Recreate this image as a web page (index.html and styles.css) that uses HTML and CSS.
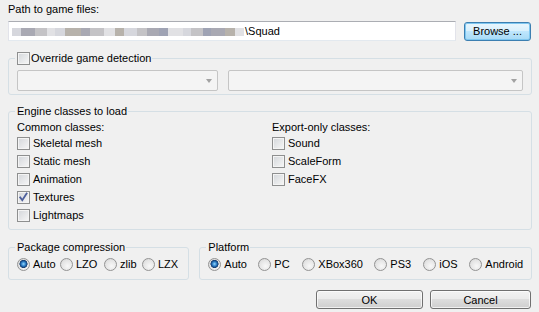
FILE: index.html
```html
<!DOCTYPE html>
<html>

<head>
  <meta charset="UTF-8">
  <title>Options</title>
  <link rel="stylesheet" href="styles.css">
</head>

<body>
  <div class="dialog">
    <div class="path-label">Path to game files:</div>
    <div class="path-row">
      <div class="textbox">
        <span class="mosaic"
        ><i class="m1" style="width:9px"></i><i class="m2" style="width:14px"></i><i class="m3" style="width:12px"></i><i class="m4" style="width:8px"></i><i class="m1" style="width:10px"></i><i class="m5" style="width:16px"></i><i class="m2" style="width:9px"></i><i class="m3" style="width:14px"></i><i class="m4" style="width:11px"></i><i class="m5" style="width:9px"></i><i class="m1" style="width:13px"></i><i class="m3" style="width:10px"></i><i class="m2" style="width:12px"></i><i class="m6" style="width:9px"></i><i class="m4" style="width:15px"></i><i class="m1" style="width:8px"></i><i class="m3" style="width:12px"></i><i class="m6" style="width:8px"></i><i class="m2" style="width:14px"></i><i class="m5" style="width:10px"></i><i class="m4" style="width:9px"></i></span
        ><span class="path-end">\Squad</span>
      </div>
      <button class="btn btn-default btn-browse" type="button">Browse ...</button>
    </div>

    <fieldset class="group group-override">
      <legend class="legend-check"><label class="check"><span class="box"></span>Override game detection</label></legend>
      <div class="combo-row">
        <div class="combo combo-left"><span class="arrow"></span></div>
        <div class="combo combo-right"><span class="arrow"></span></div>
      </div>
    </fieldset>

    <fieldset class="group group-engine">
      <legend>Engine classes to load</legend>
      <div class="class-cols">
        <div class="class-col class-col-left">
          <div class="col-title">Common classes:</div>
          <label class="check row"><span class="box"></span>Skeletal mesh</label>
          <label class="check row"><span class="box"></span>Static mesh</label>
          <label class="check row"><span class="box"></span>Animation</label>
          <label class="check row"><span class="box box-checked"><svg width="13" height="13" viewBox="0 0 13 13"><path d="M3.2 6.4 L5.3 9.2 L9.6 2.6" fill="none" stroke="#4d5f9c" stroke-width="1.8" stroke-linecap="square"/></svg></span>Textures</label>
          <label class="check row"><span class="box"></span>Lightmaps</label>
        </div>
        <div class="class-col">
          <div class="col-title">Export-only classes:</div>
          <label class="check row"><span class="box"></span>Sound</label>
          <label class="check row"><span class="box"></span>ScaleForm</label>
          <label class="check row"><span class="box"></span>FaceFX</label>
        </div>
      </div>
    </fieldset>

    <div class="bottom-groups">
      <fieldset class="group group-compression">
        <legend>Package compression</legend>
        <div class="radio-row">
          <label class="radio w43"><span class="dot dot-on"></span>Auto</label>
          <label class="radio w44"><span class="dot"></span>LZO</label>
          <label class="radio w38"><span class="dot"></span>zlib</label>
          <label class="radio"><span class="dot"></span>LZX</label>
        </div>
      </fieldset>
      <fieldset class="group group-platform">
        <legend>Platform</legend>
        <div class="radio-row">
          <label class="radio w50"><span class="dot dot-on"></span>Auto</label>
          <label class="radio w44"><span class="dot"></span>PC</label>
          <label class="radio w72"><span class="dot"></span>XBox360</label>
          <label class="radio w49"><span class="dot"></span>PS3</label>
          <label class="radio w46"><span class="dot"></span>iOS</label>
          <label class="radio"><span class="dot"></span>Android</label>
        </div>
      </fieldset>
    </div>

    <div class="button-row">
      <button class="btn btn-ok" type="button">OK</button>
      <button class="btn btn-cancel" type="button">Cancel</button>
    </div>
  </div>
</body>

</html>
```

FILE: styles.css
```css
html,
body {
  margin: 0;
  background: #f0f0f0;
}

.dialog {
  box-sizing: border-box;
  width: 539px;
  height: 312px;
  padding: 3px 7px 0 8px;
  font-family: "Liberation Sans", Arial, sans-serif;
  font-size: 11px;
  line-height: 13px;
  color: #000;
}

.path-label {
  height: 13px;
}

.path-row {
  display: flex;
  align-items: center;
  justify-content: space-between;
  height: 20px;
  margin-top: 5px;
  padding-right: 1px;
}

.textbox {
  box-sizing: border-box;
  display: flex;
  align-items: center;
  width: 448px;
  height: 20px;
  padding-left: 3px;
  background: #fff;
  border: 1px solid #e2e3ea;
  border-top-color: #abadb3;
  border-bottom-color: #e3e9ef;
}

.mosaic {
  display: flex;
  height: 8px;
  margin-top: 1px;
}

.mosaic i {
  display: block;
  height: 8px;
}

.m1 { background: #d6d7dd; }
.m2 { background: #a9a9b3; }
.m3 { background: #c4c3c6; }
.m4 { background: #e1e1e4; }
.m5 { background: #b7b2ab; }
.m6 { background: #9fa3b4; }

.path-end {
  margin-left: 1px;
}

.btn {
  box-sizing: border-box;
  height: 19px;
  padding: 0;
  font-family: inherit;
  font-size: 11px;
  color: #000;
  border: 1px solid #707070;
  border-radius: 3px;
  background: linear-gradient(#f2f2f2 0%, #ebebeb 45%, #dddddd 50%, #cfcfcf 100%);
  box-shadow: inset 0 0 0 1px rgba(255, 255, 255, 0.7);
}

.btn-default {
  border-color: #3c7fb1;
  background: linear-gradient(#eaf6fd 0%, #d9f0fc 45%, #bee6fd 50%, #a7d9f5 100%);
  box-shadow: inset 0 0 0 1px #7fc7f0;
}

.btn-browse {
  width: 67px;
}

.group {
  box-sizing: border-box;
  min-width: 0;
  margin: 0;
  padding: 0 8px;
  border: 1px solid #d5dfe5;
  border-radius: 3px;
}

.group legend {
  height: 13px;
  margin-left: -2px;
  padding: 0 1px 0 2px;
}

.group-override {
  margin-top: 11px;
  padding-top: 5px;
  padding-bottom: 3px;
}

.legend-check {
  margin-left: -1px;
}

.check {
  display: flex;
  align-items: center;
  gap: 3px;
}

.legend-check .check {
  gap: 1px;
}

.box {
  box-sizing: border-box;
  display: block;
  flex: none;
  width: 13px;
  height: 13px;
  border: 1px solid #8e8f8f;
  background: linear-gradient(135deg, #d3d6da 0%, #f7f7f7 100%);
  box-shadow: inset 0 0 0 1px #f4f4f4;
}

.box svg {
  display: block;
  margin: -1px;
}

.combo-row {
  display: flex;
  gap: 10px;
}

.combo {
  box-sizing: border-box;
  position: relative;
  height: 21px;
  background: #f4f4f4;
  border: 1px solid #c5c5c5;
  border-radius: 2px;
}

.combo-left {
  width: 202px;
}

.combo-right {
  width: 296px;
}

.arrow {
  position: absolute;
  right: 5px;
  top: 8px;
  width: 0;
  height: 0;
  border-left: 3.5px solid transparent;
  border-right: 3.5px solid transparent;
  border-top: 4px solid #a2a2a2;
}

.group-engine {
  margin-top: 10px;
  padding-top: 3px;
  padding-bottom: 5px;
}

.class-cols {
  display: flex;
}

.class-col-left {
  width: 255px;
}

.col-title {
  height: 13px;
}

.row {
  height: 18px;
}

.bottom-groups {
  display: flex;
  gap: 10px;
  margin-top: 11px;
}

.group-compression {
  width: 182px;
  padding-top: 3px;
  padding-bottom: 7px;
}

.group-platform {
  width: 334px;
  padding-top: 3px;
  padding-bottom: 7px;
}

.radio-row {
  display: flex;
  height: 15px;
}

.radio {
  display: flex;
  align-items: center;
  gap: 3px;
  flex: none;
}

.w38 { width: 38px; }
.w43 { width: 43px; }
.w44 { width: 44px; }
.w46 { width: 46px; }
.w49 { width: 49px; }
.w50 { width: 50px; }
.w72 { width: 72px; }

.dot {
  box-sizing: border-box;
  display: block;
  flex: none;
  width: 13px;
  height: 13px;
  border: 1px solid #939393;
  border-radius: 50%;
  background: radial-gradient(circle at 60% 65%, #f8f8f8 0%, #e4e4e4 60%, #cfcfcf 100%);
}

.dot-on {
  background:
    radial-gradient(circle at 50% 45%, #9bd8fa 0px, #3a8ed3 1.8px, #174f8f 3.2px, #1b3f6b 3.8px, transparent 4.3px),
    radial-gradient(circle at 60% 65%, #f8f8f8 0%, #e4e4e4 60%, #cfcfcf 100%);
}

.button-row {
  display: flex;
  justify-content: flex-end;
  gap: 7px;
  margin-top: 10px;
  padding-right: 1px;
}

.btn-ok {
  width: 107px;
}

.btn-cancel {
  width: 101px;
}
```
